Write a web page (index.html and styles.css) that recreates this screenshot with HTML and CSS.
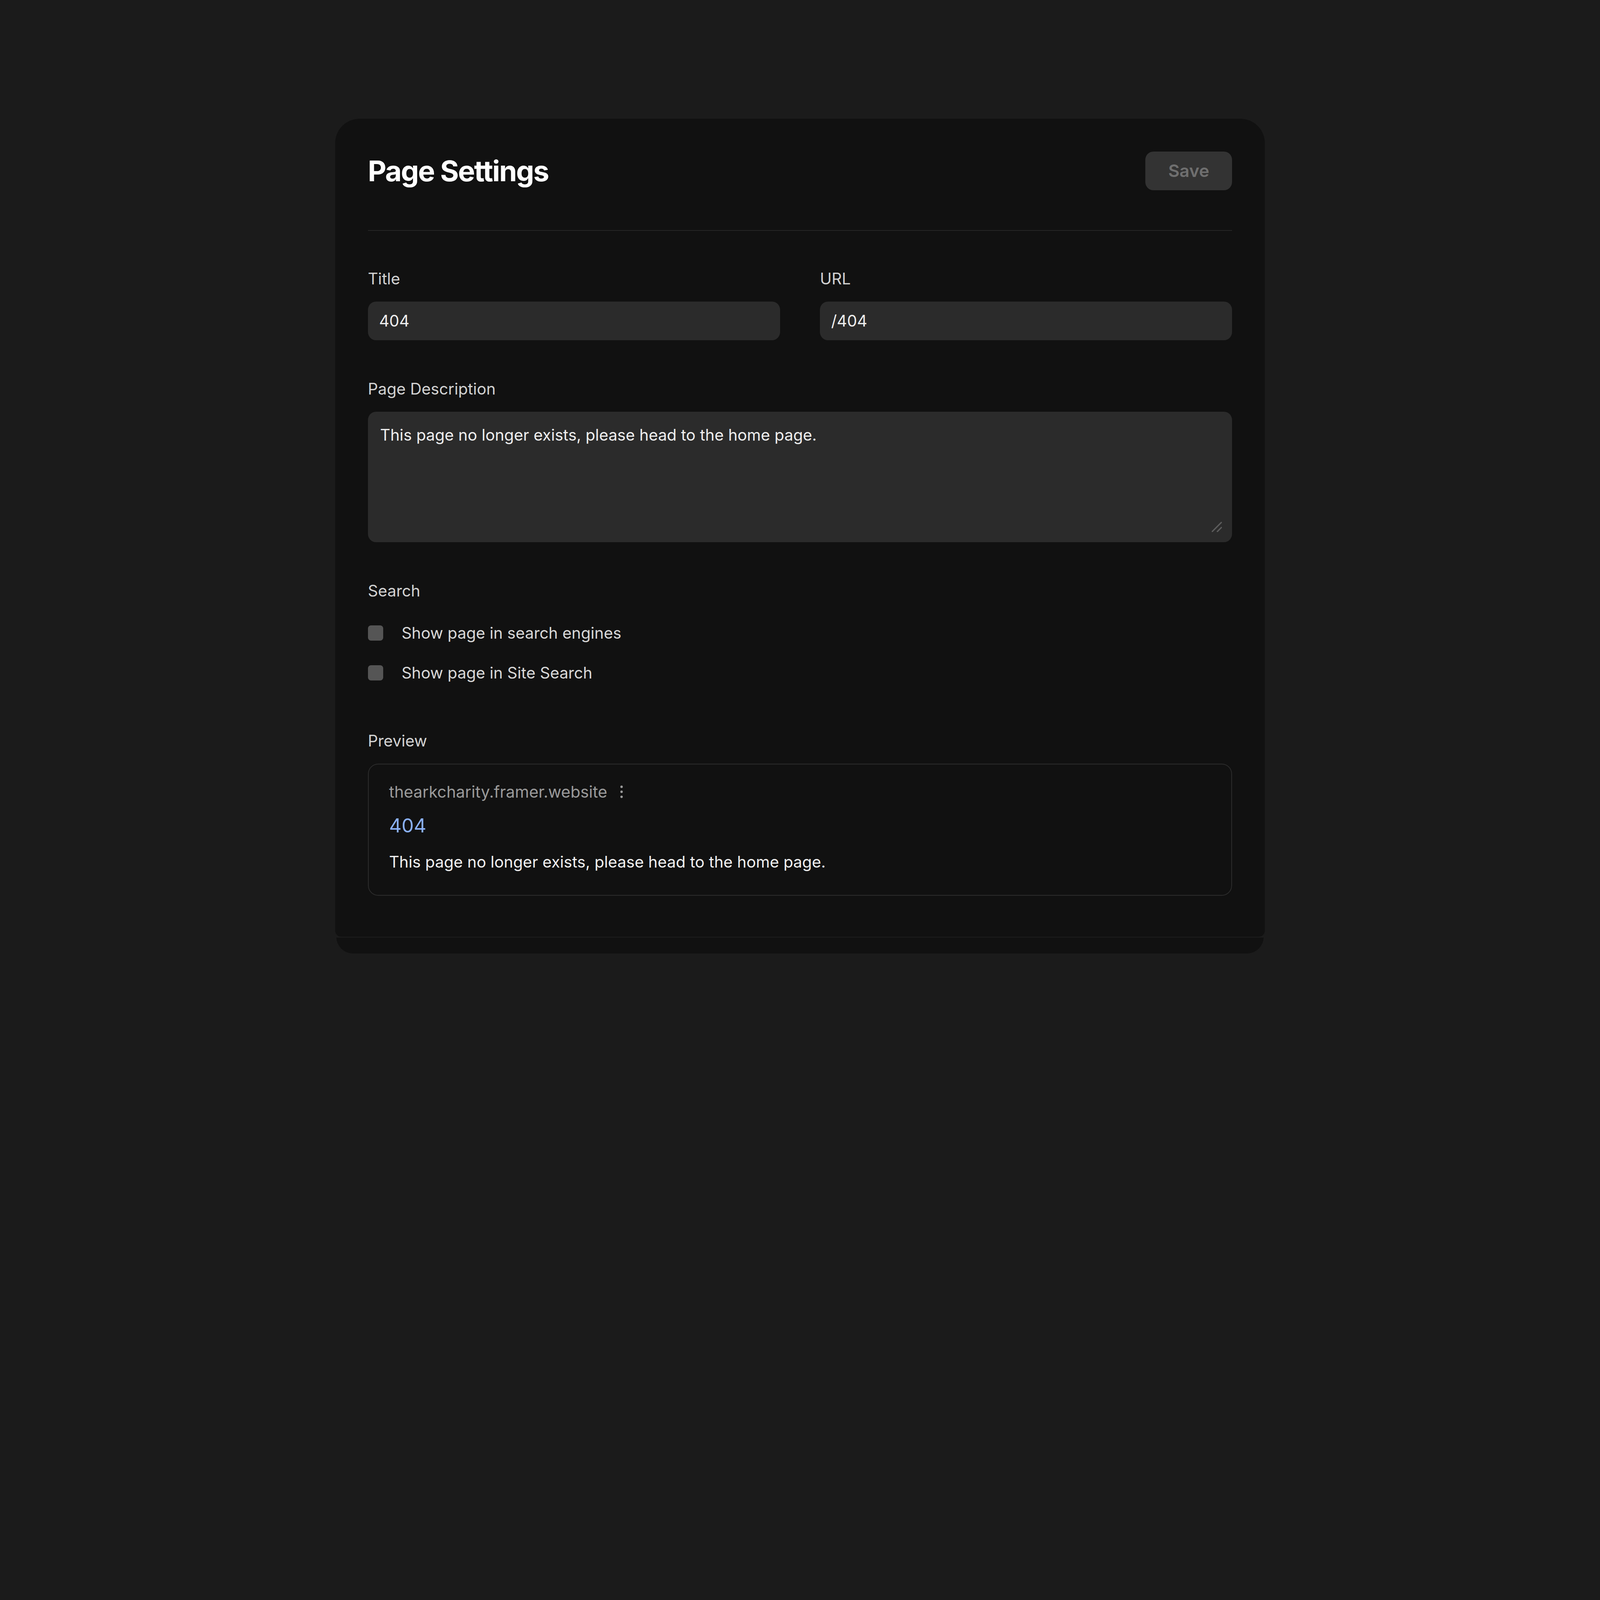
FILE: index.html
```html
<!DOCTYPE html>
<html lang="en">
<head>
  <meta charset="UTF-8">
  <meta name="viewport" content="width=device-width, initial-scale=1.0">
  <title>Page Settings</title>
  <link rel="stylesheet" href="styles.css">
</head>
<body>

  <div class="modal">
    <div class="card">

      <!-- Header -->
      <div class="card-head">
        <h1>Page Settings</h1>
        <button class="save-btn">Save</button>
      </div>
      <div class="divider"></div>

      <!-- Title + URL -->
      <div class="field-row">
        <div class="field">
          <label class="label">Title</label>
          <input class="input" type="text" value="404">
        </div>
        <div class="field">
          <label class="label">URL</label>
          <input class="input" type="text" value="/404">
        </div>
      </div>

      <!-- Description -->
      <div class="section">
        <label class="label">Page Description</label>
        <div class="textarea-wrap">
          <textarea class="textarea">This page no longer exists, please head to the home page.</textarea>
          <svg class="resize-grip" viewBox="0 0 10 10">
            <line x1="0.5" y1="9.5" x2="9.5" y2="0.5" />
            <line x1="5.5" y1="9.5" x2="9.5" y2="5.5" />
          </svg>
        </div>
      </div>

      <!-- Search -->
      <div class="section">
        <div class="label">Search</div>
        <div class="check-list">
          <label class="check-row">
            <input class="check" type="checkbox">
            <span>Show page in search engines</span>
          </label>
          <label class="check-row">
            <input class="check" type="checkbox">
            <span>Show page in Site Search</span>
          </label>
        </div>
      </div>

      <!-- Preview -->
      <div class="section preview-section">
        <div class="label">Preview</div>
        <div class="preview">
          <div class="preview-site">
            <span>thearkcharity.framer.website</span>
            <svg class="kebab" viewBox="0 0 4 13">
              <circle cx="2" cy="1.6" r="1.2" />
              <circle cx="2" cy="6.5" r="1.2" />
              <circle cx="2" cy="11.4" r="1.2" />
            </svg>
          </div>
          <div class="preview-title">404</div>
          <div class="preview-desc">This page no longer exists, please head to the home page.</div>
        </div>
      </div>

    </div>
    <div class="card-foot"></div>
  </div>

</body>
</html>
```

FILE: styles.css
```css
/* 1rem = 10px of the 1568px wide design */
html {
  font-size: calc(100vw / 156.8);
  background-color: #1b1b1b;
  overflow: hidden;
}

body {
  margin: 0;
  padding: 0;
  height: 105.1rem;
  display: flex;
  justify-content: center;
  align-items: center;
  background-color: #1b1b1b;
  font-family: Inter, "Noto Sans", Arial, sans-serif;
  color: #e6e6e6;
}

.modal {
  width: 91.1rem;
}

.card {
  background-color: #111111;
  border-radius: 2.4rem 2.4rem 0.6rem 0.6rem;
  padding: 3.2rem 3.2rem 4rem;
}

.card-foot {
  height: 1.6rem;
  margin: 0 0.1rem;
  background-color: #111111;
  border-top: 0.1rem solid #1d1d1d;
  border-radius: 0 0 2.2rem 2.2rem;
}

.card-head {
  display: flex;
  justify-content: space-between;
  align-items: center;
  height: 3.8rem;
}

h1 {
  margin: 0;
  font-size: 2.8rem;
  font-weight: 700;
  letter-spacing: -0.03em;
  color: #ffffff;
}

.save-btn {
  width: 8.5rem;
  height: 3.8rem;
  border: none;
  border-radius: 0.8rem;
  background-color: #333333;
  color: #6f6f6f;
  font-family: inherit;
  font-size: 1.7rem;
  font-weight: 600;
  cursor: pointer;
}

.divider {
  height: 0.1rem;
  margin-top: 3.9rem;
  background-color: #262626;
}

.field-row {
  display: grid;
  grid-template-columns: 1fr 1fr;
  gap: 3.9rem;
  margin-top: 3.7rem;
}

.field {
  display: flex;
  flex-direction: column;
}

.section {
  display: flex;
  flex-direction: column;
  margin-top: 3.8rem;
}

.label {
  display: block;
  font-size: 1.55rem;
  line-height: 2rem;
  color: #d2d2d2;
  margin-bottom: 1.2rem;
}

.input,
.textarea {
  box-sizing: border-box;
  width: 100%;
  border: none;
  outline: none;
  border-radius: 0.8rem;
  background-color: #2b2b2b;
  color: #eeeeee;
  font-family: inherit;
  font-size: 1.55rem;
  line-height: 2rem;
}

.input {
  height: 3.8rem;
  padding: 0 1.1rem;
}

.textarea-wrap {
  position: relative;
}

.textarea {
  display: block;
  height: 12.8rem;
  padding: 1.3rem 1.2rem;
  resize: none;
}

.resize-grip {
  position: absolute;
  right: 1rem;
  bottom: 1rem;
  width: 1rem;
  height: 1rem;
  stroke: #5c5c5c;
  stroke-width: 1.3;
  stroke-linecap: round;
}

.label + .check-list {
  margin-top: 0.9rem;
}

.check-list {
  display: flex;
  flex-direction: column;
  gap: 1.9rem;
}

.check-row {
  display: flex;
  align-items: center;
  gap: 1.8rem;
  height: 2rem;
  font-size: 1.55rem;
  color: #d8d8d8;
}

.check {
  appearance: none;
  margin: 0;
  width: 1.5rem;
  height: 1.5rem;
  border-radius: 0.3rem;
  background-color: #555555;
}

.preview-section {
  margin-top: 4.7rem;
}

.preview {
  border: 0.1rem solid #2c2c2c;
  border-radius: 1rem;
  padding: 1.7rem 2rem 2.2rem;
}

.preview-site {
  display: flex;
  align-items: center;
  gap: 1.2rem;
  font-size: 1.58rem;
  line-height: 2rem;
  color: #9a9a9a;
}

.kebab {
  width: 0.4rem;
  height: 1.3rem;
  fill: #9a9a9a;
}

.preview-title {
  margin-top: 1.1rem;
  font-size: 1.9rem;
  line-height: 2.4rem;
  color: #8ab0f5;
}

.preview-desc {
  margin-top: 1.4rem;
  font-size: 1.55rem;
  line-height: 2rem;
  color: #f0f0f0;
}
```
